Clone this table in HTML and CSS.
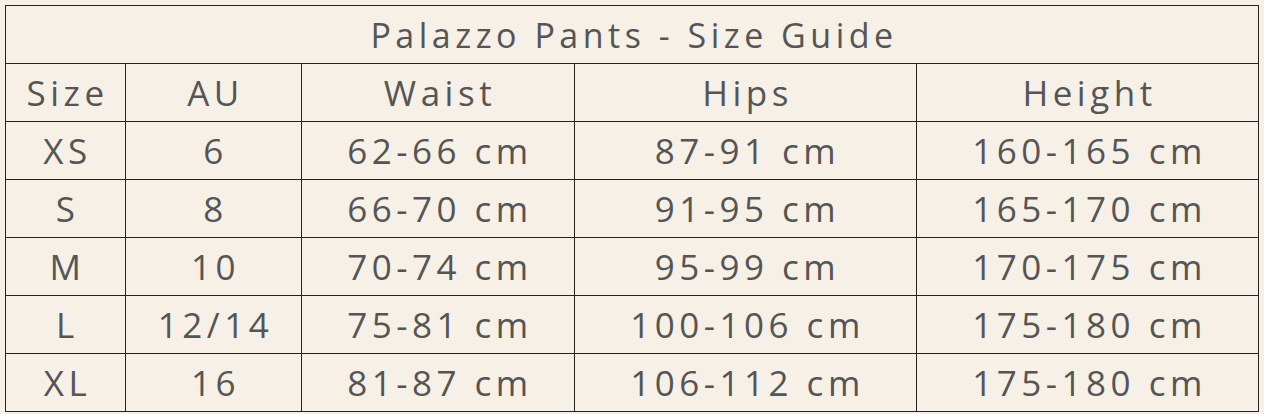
FILE: index.html
```html
<!DOCTYPE html>
<html>
<head>
<meta charset="utf-8">
<link rel="stylesheet" href="styles.css">
</head>
<body>
<table class="guide">
  <colgroup>
    <col class="c1"><col class="c2"><col class="c3"><col class="c4"><col class="c5">
  </colgroup>
  <tr><td class="title" colspan="5">Palazzo Pants - Size Guide</td></tr>
  <tr><td>Size</td><td>AU</td><td>Waist</td><td>Hips</td><td>Height</td></tr>
  <tr><td>XS</td><td>6</td><td>62-66 cm</td><td>87-91 cm</td><td>160-165 cm</td></tr>
  <tr><td>S</td><td>8</td><td>66-70 cm</td><td>91-95 cm</td><td>165-170 cm</td></tr>
  <tr><td>M</td><td>10</td><td>70-74 cm</td><td>95-99 cm</td><td>170-175 cm</td></tr>
  <tr><td>L</td><td>12/14</td><td>75-81 cm</td><td>100-106 cm</td><td>175-180 cm</td></tr>
  <tr><td>XL</td><td>16</td><td>81-87 cm</td><td>106-112 cm</td><td>175-180 cm</td></tr>
</table>
</body>
</html>
```
FILE: styles.css
```css
html, body {
  margin: 0;
  padding: 0;
  background: #f6f0e7;
}
body {
  padding: 5px;
}
.guide {
  border-collapse: collapse;
  table-layout: fixed;
  width: 1254px;
  background: #f6f0e7;
  font-family: "Open Sans", "Liberation Sans", sans-serif;
  color: #555555;
}
.c1 { width: 120px; }
.c2 { width: 176px; }
.c3 { width: 273px; }
.c4 { width: 342px; }
.c5 { width: 342px; }
.guide td {
  border: 1px solid #222222;
  height: 57px;
  padding: 0 0 0 4px;
  text-align: center;
  vertical-align: middle;
  font-size: 35px;
  letter-spacing: 4.5px;
  line-height: 1;
}
.guide td.title {
  font-size: 34px;
  letter-spacing: 4.5px;
}
```
